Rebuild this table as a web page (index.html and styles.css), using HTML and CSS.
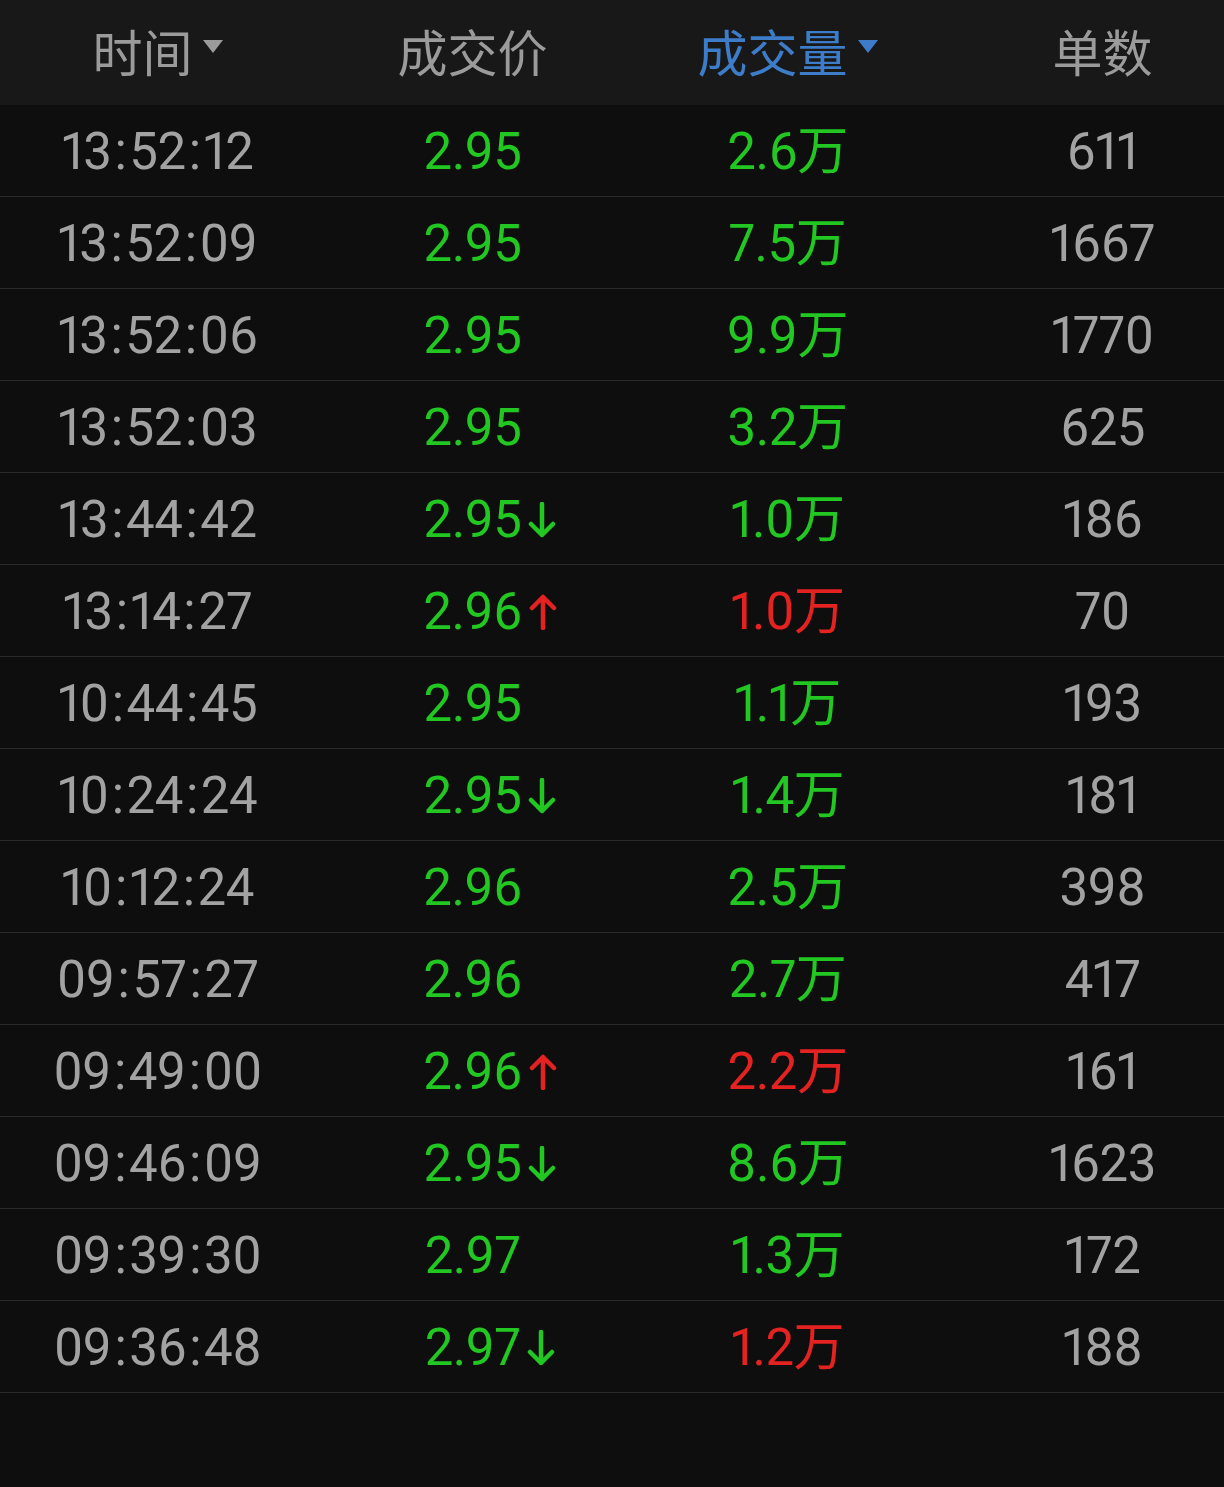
FILE: index.html
```html
<!DOCTYPE html>
<html lang="zh">
<head>
<meta charset="utf-8">
<title>成交明细</title>
<link rel="stylesheet" href="styles.css">
</head>
<body>
<div class="page">
  <div class="head">
    <div class="hcell">时间<span class="tri"></span></div>
    <div class="hcell">成交价</div>
    <div class="hcell active">成交量<span class="tri"></span></div>
    <div class="hcell">单数</div>
  </div>
  <div class="rows">
    <div class="row"><div class="c t">13<span class="col">:</span>52<span class="col">:</span>12</div><div class="c p g">2.95</div><div class="c v g">2.6万</div><div class="c n">611</div></div>
    <div class="row"><div class="c t">13<span class="col">:</span>52<span class="col">:</span>09</div><div class="c p g">2.95</div><div class="c v g">7.5万</div><div class="c n">1667</div></div>
    <div class="row"><div class="c t">13<span class="col">:</span>52<span class="col">:</span>06</div><div class="c p g">2.95</div><div class="c v g">9.9万</div><div class="c n">1770</div></div>
    <div class="row"><div class="c t">13<span class="col">:</span>52<span class="col">:</span>03</div><div class="c p g">2.95</div><div class="c v g">3.2万</div><div class="c n">625</div></div>
    <div class="row"><div class="c t">13<span class="col">:</span>44<span class="col">:</span>42</div><div class="c p g"><span class="num">2.95<svg class="arr down" viewBox="0 0 28 36"><path d="M14 2V33M3 22L14 33L25 22"/></svg></span></div><div class="c v g">1.0万</div><div class="c n">186</div></div>
    <div class="row"><div class="c t">13<span class="col">:</span>14<span class="col">:</span>27</div><div class="c p g"><span class="num">2.96<svg class="arr up" viewBox="0 0 28 36"><path d="M14 34V3M3 14L14 3L25 14"/></svg></span></div><div class="c v r">1.0万</div><div class="c n">70</div></div>
    <div class="row"><div class="c t">10<span class="col">:</span>44<span class="col">:</span>45</div><div class="c p g">2.95</div><div class="c v g">1.1万</div><div class="c n">193</div></div>
    <div class="row"><div class="c t">10<span class="col">:</span>24<span class="col">:</span>24</div><div class="c p g"><span class="num">2.95<svg class="arr down" viewBox="0 0 28 36"><path d="M14 2V33M3 22L14 33L25 22"/></svg></span></div><div class="c v g">1.4万</div><div class="c n">181</div></div>
    <div class="row"><div class="c t">10<span class="col">:</span>12<span class="col">:</span>24</div><div class="c p g">2.96</div><div class="c v g">2.5万</div><div class="c n">398</div></div>
    <div class="row"><div class="c t">09<span class="col">:</span>57<span class="col">:</span>27</div><div class="c p g">2.96</div><div class="c v g">2.7万</div><div class="c n">417</div></div>
    <div class="row"><div class="c t">09<span class="col">:</span>49<span class="col">:</span>00</div><div class="c p g"><span class="num">2.96<svg class="arr up" viewBox="0 0 28 36"><path d="M14 34V3M3 14L14 3L25 14"/></svg></span></div><div class="c v r">2.2万</div><div class="c n">161</div></div>
    <div class="row"><div class="c t">09<span class="col">:</span>46<span class="col">:</span>09</div><div class="c p g"><span class="num">2.95<svg class="arr down" viewBox="0 0 28 36"><path d="M14 2V33M3 22L14 33L25 22"/></svg></span></div><div class="c v g">8.6万</div><div class="c n">1623</div></div>
    <div class="row"><div class="c t">09<span class="col">:</span>39<span class="col">:</span>30</div><div class="c p g">2.97</div><div class="c v g">1.3万</div><div class="c n">172</div></div>
    <div class="row"><div class="c t">09<span class="col">:</span>36<span class="col">:</span>48</div><div class="c p g"><span class="num">2.97<svg class="arr down" viewBox="0 0 28 36"><path d="M14 2V33M3 22L14 33L25 22"/></svg></span></div><div class="c v r">1.2万</div><div class="c n">188</div></div>
  </div>
</div>
</body>
</html>
```

FILE: styles.css
```css
html, body {
  margin: 0;
  padding: 0;
  background: #0e0e0e;
  overflow: hidden;
}
.page {
  width: 1224px;
  height: 1487px;
  overflow: hidden;
  background: #0e0e0e;
  font-family: Roboto, "Noto Sans CJK SC", sans-serif;
}
.head {
  display: grid;
  grid-template-columns: repeat(4, 315px);
  height: 105px;
  background: #181818;
  align-items: center;
}
.hcell {
  display: flex;
  justify-content: center;
  align-items: center;
  font-family: "Noto Sans CJK SC", sans-serif;
  font-size: 50px;
  color: #9b9b9b;
  line-height: 1;
  padding-bottom: 6px;
}
.hcell.active {
  color: #3d7cc9;
}
.tri {
  width: 0;
  height: 0;
  border-left: 10px solid transparent;
  border-right: 10px solid transparent;
  border-top: 13px solid #9b9b9b;
  margin-left: 10px;
  margin-top: -6px;
}
.active .tri {
  border-top-color: #3d7cc9;
}
.row {
  display: grid;
  grid-template-columns: repeat(4, 315px);
  height: 91px;
  border-bottom: 1px solid #2a2a2a;
  align-items: center;
}
.c {
  text-align: center;
  font-size: 51px;
  line-height: 1;
  letter-spacing: -0.5px;
  padding-top: 2px;
  font-variant-numeric: proportional-nums;
}
.col {
  margin: 0 3px;
}
.t, .n {
  color: #a2a2a2;
}
.g {
  color: #22c722;
}
.r {
  color: #e42222;
}
.num {
  position: relative;
}
.arr {
  position: absolute;
  left: 100%;
  top: 50%;
  width: 28px;
  height: 36px;
  margin-left: 7px;
  margin-top: -18px;
  fill: none;
  stroke-width: 4.5;
  stroke-linecap: round;
  stroke-linejoin: round;
}
.arr.down {
  stroke: #22c722;
}
.arr.up {
  stroke: #e42222;
}
```
